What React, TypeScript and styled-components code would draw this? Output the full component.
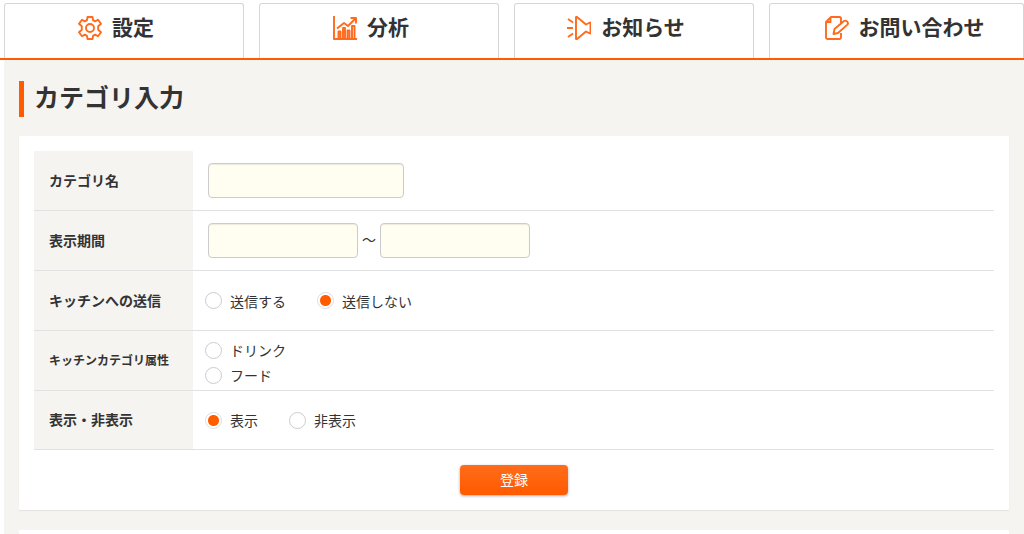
import React, { useState } from "react";
import styled, { createGlobalStyle } from "styled-components";

const accent = "#ff5c00";
const line = "#e2e2e2";
const ground = "#f5f4f0";

const GlobalStyle = createGlobalStyle`
  * { box-sizing: border-box; }
  body {
    margin: 0;
    background: #fff;
    color: #333;
    font-family: "Noto Sans CJK JP", sans-serif;
    font-size: 14px;
    line-height: 20px;
  }
`;

const Nav = styled.nav`
  display: grid;
  grid-template-columns: 240fr 240fr 240fr 255fr;
  gap: 15px;
  padding: 3px 0 0 4px;
  border-bottom: 2px solid ${accent};
`;

const Tab = styled.a<{ $last?: boolean }>`
  display: flex;
  align-items: center;
  justify-content: center;
  gap: 10px;
  height: 55px;
  padding: ${(p) => (p.$last ? "0 0 6px 16px" : "0 16px 6px 0")};
  border: 1px solid #d6d6d6;
  border-bottom: 0;
  border-radius: 3px 3px 0 0;
  color: #333;
  font-size: 21px;
  line-height: 30px;
  font-weight: 700;
  text-decoration: none;
  white-space: nowrap;
`;

const TabLabel = styled.span`
  padding-bottom: 4px;
`;

const Icon = styled.svg`
  flex: none;
  width: 24px;
  height: 24px;
  fill: none;
  stroke: #ff6a1c;
  stroke-width: 1.9;
  stroke-linejoin: round;
`;

const Main = styled.main`
  margin-left: 4px;
  padding: 21px 15px 0;
  background: ${ground};
`;

const Title = styled.h1`
  margin: 0 0 19px;
  padding: 0 0 6px 10px;
  border-left: 5px solid ${accent};
  font-size: 25px;
  line-height: 30px;
  font-weight: 700;
`;

const Card = styled.section`
  margin-bottom: 20px;
  padding: 15px;
  min-height: 60px;
  background: #fff;
  box-shadow: 0 1px 1px rgba(0, 0, 0, 0.06);
`;

const Table = styled.table`
  width: 100%;
  border-collapse: separate;
  border-spacing: 0;
`;

const Row = styled.tr`
  height: 60px;
  &:last-child { height: 59px; }
`;

const Head = styled.th<{ $small?: boolean }>`
  width: 159px;
  padding: 0 15px 2px;
  border-bottom: 1px solid ${line};
  background: ${ground};
  font-size: ${(p) => (p.$small ? "12px" : "14px")};
  font-weight: 700;
  text-align: left;
  white-space: nowrap;
`;

const Cell = styled.td<{ $radios?: boolean }>`
  padding: 0 ${(p) => (p.$radios ? "12px" : "15px")};
  border-bottom: 1px solid ${line};
`;

const Fields = styled.div`
  display: flex;
  align-items: center;
  gap: 4px;
`;

const Tilde = styled.span`
  padding-bottom: 4px;
`;

const TextBox = styled.input<{ $wide?: boolean }>`
  width: ${(p) => (p.$wide ? "196px" : "150px")};
  height: 35px;
  padding: 0 8px;
  border: 1px solid #ccc;
  border-radius: 4px;
  background: #fffef0;
  box-shadow: inset 0 1px 1px rgba(0, 0, 0, 0.08);
  color: inherit;
  font: inherit;
`;

const Choices = styled.div<{ $stacked?: boolean }>`
  display: flex;
  flex-direction: ${(p) => (p.$stacked ? "column" : "row")};
  gap: ${(p) => (p.$stacked ? "5px" : "31px")};
  padding-top: ${(p) => (p.$stacked ? "4px" : "0")};
`;

const Choice = styled.label`
  display: flex;
  align-items: center;
  gap: 8px;
`;

const Radio = styled.input`
  appearance: none;
  width: 17px;
  height: 17px;
  margin: 0;
  border: 1px solid #ccc;
  border-radius: 50%;
  background: #fff;
  &:checked {
    border-color: #ddd;
    background: radial-gradient(circle, ${accent} 5px, #fff 6px);
  }
`;

const Actions = styled.div`
  display: flex;
  justify-content: center;
  padding-top: 15px;
`;

const Submit = styled.button`
  width: 108px;
  height: 30px;
  padding: 0 0 2px;
  border: 0;
  border-radius: 4px;
  background: linear-gradient(#ff6c1a, #ff5a00);
  box-shadow: 0 1px 3px rgba(0, 0, 0, 0.35);
  color: #fff;
  font: inherit;
`;

const GearIcon = () => (
  <Icon viewBox="0 0 24 24" aria-hidden="true">
    <path d="M9.500 1h5l.5 3.200 2.200 1.200 2.800-1.600 3 4-2.800 2.400v3.600l2.800 2.400-3 4-2.800-1.600-2.200 1.200-.5 3.200h-5L9 19.800l-2.200-1.200L4 20.200l-3-4 2.800-2.400v-3.600L1 7.800l3-4 2.800 1.600L9 4.200z" />
    <circle cx="12" cy="12" r="4" />
  </Icon>
);

const ChartIcon = () => (
  <Icon viewBox="0 0 24 24" aria-hidden="true">
    <path d="M1 0v23h23M4 12.500l7-5.500 4 3 7.500-7.500M17.500 2H23v5.500" />
    <path d="M5.500 22v-6.500h2V22M10 22V12h2v10M14.500 22v-7.500h2V22M19 22V10h2.500v12" />
  </Icon>
);

const HornIcon = () => (
  <Icon viewBox="0 0 24 24" aria-hidden="true">
    <path d="M9 1.500q0-1 1-.5l9 7.500 4-2q.5 0 .5.500v10q0 .5-.5.500l-4-2-9 7.500q-1 .5-1-.5zM1 3l5 3.500M0 12h6M1 21l5-3.500" />
  </Icon>
);

const NoteIcon = () => (
  <Icon viewBox="0 0 24 24" aria-hidden="true">
    <path d="M16 7V2.500Q16 1 14.500 1H6L1 6v15.500Q1 23 2.500 23h12q1.500 0 1.500-1.500V17M1 6h4.500V1" />
    <path d="m8.500 18 1-5L19 5q1.500-1 3.200.6 1.400 1.600.2 3L13 17z" />
  </Icon>
);

const tabs = [
  { label: "設定", icon: <GearIcon /> },
  { label: "分析", icon: <ChartIcon /> },
  { label: "お知らせ", icon: <HornIcon /> },
  { label: "お問い合わせ", icon: <NoteIcon /> },
];

type RadioGroupProps = {
  name: string;
  label: string;
  options: string[];
  initial?: string;
  stacked?: boolean;
};

function RadioGroup({ name, label, options, initial, stacked }: RadioGroupProps) {
  const [value, setValue] = useState(initial);
  return (
    <Choices role="radiogroup" aria-label={label} $stacked={stacked}>
      {options.map((option) => (
        <Choice key={option}>
          <Radio
            type="radio"
            name={name}
            value={option}
            checked={value === option}
            onChange={() => setValue(option)}
          />
          {option}
        </Choice>
      ))}
    </Choices>
  );
}

export default function App() {
  return (
    <>
      <GlobalStyle />
      <Nav>
        {tabs.map((tab, i) => (
          <Tab key={tab.label} href="#" $last={i === tabs.length - 1}>
            {tab.icon}
            <TabLabel>{tab.label}</TabLabel>
          </Tab>
        ))}
      </Nav>
      <Main>
        <Title>カテゴリ入力</Title>
        <Card as="form" onSubmit={(e: React.FormEvent) => e.preventDefault()}>
          <Table>
            <tbody>
              <Row>
                <Head scope="row"><label htmlFor="category">カテゴリ名</label></Head>
                <Cell><Fields><TextBox id="category" type="text" $wide /></Fields></Cell>
              </Row>
              <Row>
                <Head scope="row"><label htmlFor="from">表示期間</label></Head>
                <Cell>
                  <Fields>
                    <TextBox id="from" type="text" />
                    <Tilde>～</Tilde>
                    <TextBox type="text" aria-label="表示期間" />
                  </Fields>
                </Cell>
              </Row>
              <Row>
                <Head scope="row">キッチンへの送信</Head>
                <Cell $radios>
                  <RadioGroup name="send" label="キッチンへの送信" options={["送信する", "送信しない"]} initial="送信しない" />
                </Cell>
              </Row>
              <Row>
                <Head scope="row" $small>キッチンカテゴリ属性</Head>
                <Cell $radios>
                  <RadioGroup name="kind" label="キッチンカテゴリ属性" options={["ドリンク", "フード"]} stacked />
                </Cell>
              </Row>
              <Row>
                <Head scope="row">表示・非表示</Head>
                <Cell $radios>
                  <RadioGroup name="visible" label="表示・非表示" options={["表示", "非表示"]} initial="表示" />
                </Cell>
              </Row>
            </tbody>
          </Table>
          <Actions><Submit type="submit">登録</Submit></Actions>
        </Card>
        <Card />
      </Main>
    </>
  );
}
